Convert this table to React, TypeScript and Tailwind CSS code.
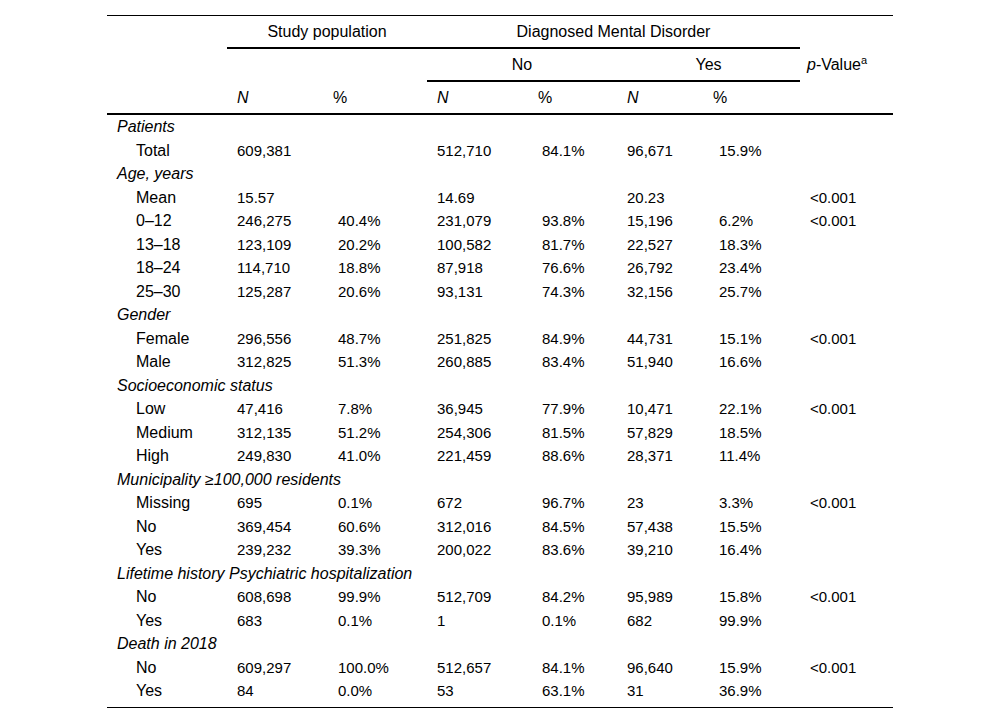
import React from 'react';

type Row = {
  label: string;
  n1: string;
  p1: string;
  n2: string;
  p2: string;
  n3: string;
  p3: string;
  pv?: string;
};

type Group = { title: string; rows: Row[] };

const groups: Group[] = [
  {
    title: 'Patients',
    rows: [{ label: 'Total', n1: '609,381', p1: '', n2: '512,710', p2: '84.1%', n3: '96,671', p3: '15.9%' }],
  },
  {
    title: 'Age, years',
    rows: [
      { label: 'Mean', n1: '15.57', p1: '', n2: '14.69', p2: '', n3: '20.23', p3: '', pv: '<0.001' },
      { label: '0–12', n1: '246,275', p1: '40.4%', n2: '231,079', p2: '93.8%', n3: '15,196', p3: '6.2%', pv: '<0.001' },
      { label: '13–18', n1: '123,109', p1: '20.2%', n2: '100,582', p2: '81.7%', n3: '22,527', p3: '18.3%' },
      { label: '18–24', n1: '114,710', p1: '18.8%', n2: '87,918', p2: '76.6%', n3: '26,792', p3: '23.4%' },
      { label: '25–30', n1: '125,287', p1: '20.6%', n2: '93,131', p2: '74.3%', n3: '32,156', p3: '25.7%' },
    ],
  },
  {
    title: 'Gender',
    rows: [
      { label: 'Female', n1: '296,556', p1: '48.7%', n2: '251,825', p2: '84.9%', n3: '44,731', p3: '15.1%', pv: '<0.001' },
      { label: 'Male', n1: '312,825', p1: '51.3%', n2: '260,885', p2: '83.4%', n3: '51,940', p3: '16.6%' },
    ],
  },
  {
    title: 'Socioeconomic status',
    rows: [
      { label: 'Low', n1: '47,416', p1: '7.8%', n2: '36,945', p2: '77.9%', n3: '10,471', p3: '22.1%', pv: '<0.001' },
      { label: 'Medium', n1: '312,135', p1: '51.2%', n2: '254,306', p2: '81.5%', n3: '57,829', p3: '18.5%' },
      { label: 'High', n1: '249,830', p1: '41.0%', n2: '221,459', p2: '88.6%', n3: '28,371', p3: '11.4%' },
    ],
  },
  {
    title: 'Municipality ≥100,000 residents',
    rows: [
      { label: 'Missing', n1: '695', p1: '0.1%', n2: '672', p2: '96.7%', n3: '23', p3: '3.3%', pv: '<0.001' },
      { label: 'No', n1: '369,454', p1: '60.6%', n2: '312,016', p2: '84.5%', n3: '57,438', p3: '15.5%' },
      { label: 'Yes', n1: '239,232', p1: '39.3%', n2: '200,022', p2: '83.6%', n3: '39,210', p3: '16.4%' },
    ],
  },
  {
    title: 'Lifetime history Psychiatric hospitalization',
    rows: [
      { label: 'No', n1: '608,698', p1: '99.9%', n2: '512,709', p2: '84.2%', n3: '95,989', p3: '15.8%', pv: '<0.001' },
      { label: 'Yes', n1: '683', p1: '0.1%', n2: '1', p2: '0.1%', n3: '682', p3: '99.9%' },
    ],
  },
  {
    title: 'Death in 2018',
    rows: [
      { label: 'No', n1: '609,297', p1: '100.0%', n2: '512,657', p2: '84.1%', n3: '96,640', p3: '15.9%', pv: '<0.001' },
      { label: 'Yes', n1: '84', p1: '0.0%', n2: '53', p2: '63.1%', n3: '31', p3: '36.9%' },
    ],
  },
];

const cols = 'grid grid-cols-[120px_101px_99px_105px_85px_92px_91px_93px]';

function DataRow({ row }: { row: Row }) {
  return (
    <div className={`${cols} h-[23.5px] items-baseline leading-[23.5px]`}>
      <span className="pl-[29px] text-[16px]">{row.label}</span>
      <span className="pl-[10px]">{row.n1}</span>
      <span className="pl-[10px]">{row.p1}</span>
      <span className="pl-[10px]">{row.n2}</span>
      <span className="pl-[10px]">{row.p2}</span>
      <span className="pl-[10px]">{row.n3}</span>
      <span className="pl-[10px]">{row.p3}</span>
      <span className="pl-[10px]">{row.pv}</span>
    </div>
  );
}

export default function App() {
  return (
    <div className="min-h-screen w-full bg-white text-black font-['Liberation_Sans',Arial,sans-serif] text-[15px] leading-none">
      <div className="ml-[107px] mt-[15px] w-[786px] border-t border-b border-black pb-[4px]">
        {/* header */}
        <div className={`${cols} grid-rows-[33px_33px_31px] border-b-2 border-black text-[16px]`}>
          <div className="row-span-3" />
          <div className="col-span-2 flex items-center justify-center border-b-2 border-black">
            Study population
          </div>
          <div className="col-span-4 flex items-center justify-center border-b-2 border-black">
            Diagnosed Mental Disorder
          </div>
          <div className="row-span-3 flex items-center pl-[7px]">
            <span className="flex items-start">
              <i>p</i>-Value<span className="text-[11px] -mt-[2px]">a</span>
            </span>
          </div>
          <div className="col-span-2" />
          <div className="col-span-2 flex items-center justify-center border-b-2 border-black">No</div>
          <div className="col-span-2 flex items-center justify-center border-b-2 border-black">Yes</div>
          <div className="flex items-center pl-[10px] italic">N</div>
          <div className="flex items-center pl-[5px]">%</div>
          <div className="flex items-center pl-[10px] italic">N</div>
          <div className="flex items-center pl-[6px]">%</div>
          <div className="flex items-center pl-[10px] italic">N</div>
          <div className="flex items-center pl-[4px]">%</div>
        </div>

        {/* body */}
        {groups.map((g) => (
          <div key={g.title}>
            <div className="h-[23.5px] leading-[23.5px] pl-[10px] italic text-[16px]">{g.title}</div>
            {g.rows.map((r, i) => (
              <DataRow key={i} row={r} />
            ))}
          </div>
        ))}
      </div>
    </div>
  );
}
